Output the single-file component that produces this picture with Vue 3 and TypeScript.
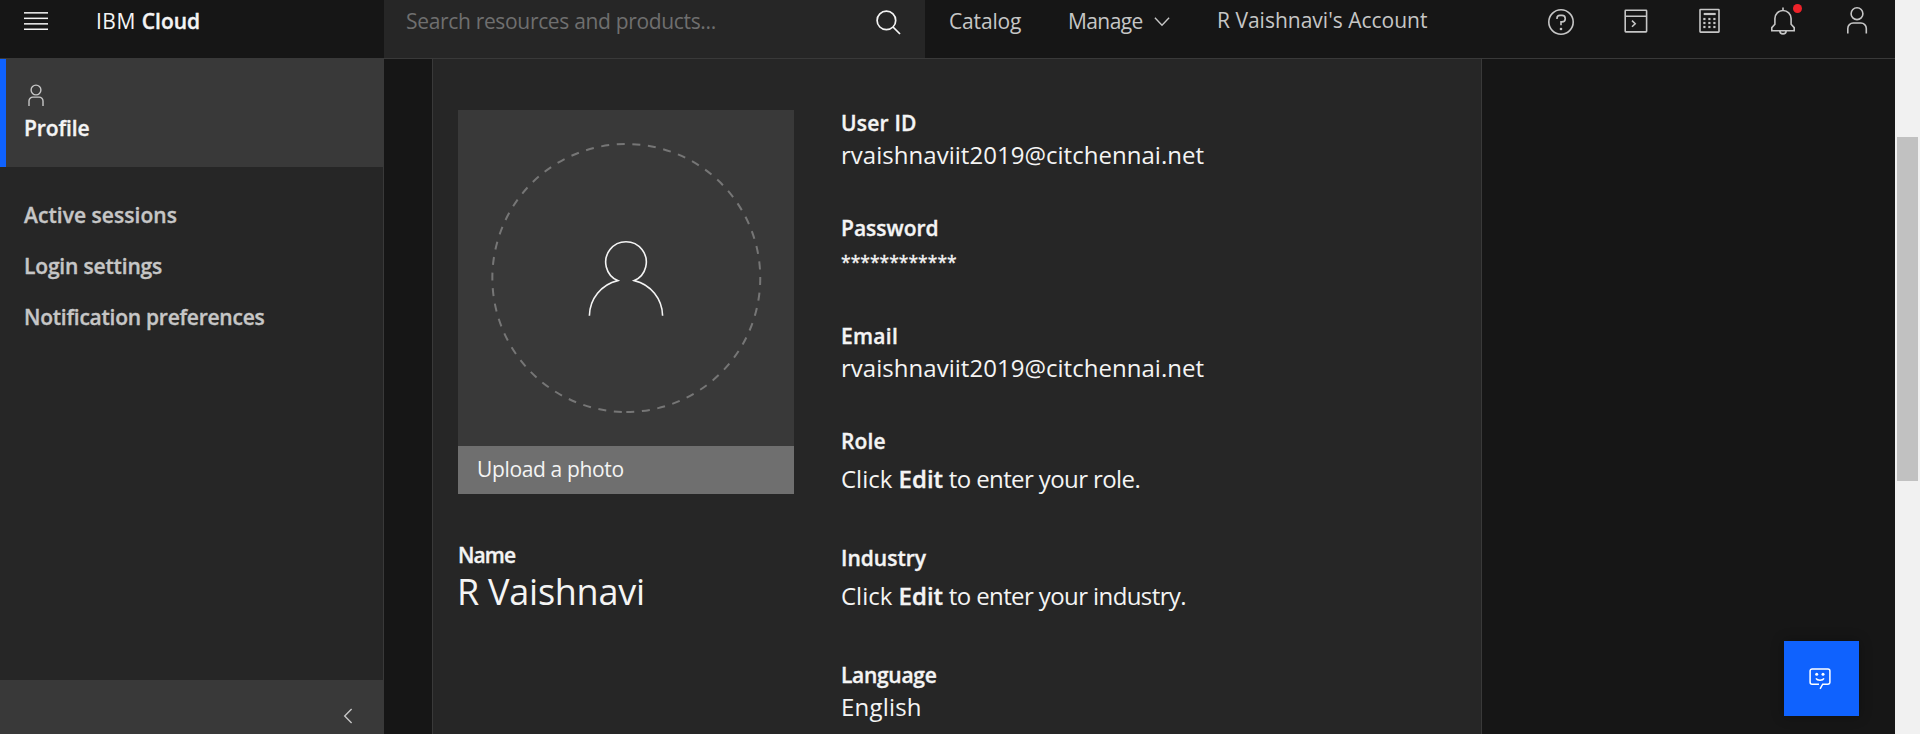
<script setup lang="ts">
interface Tracked {
  text: string
  spacing: number
}

interface Field {
  label: Tracked
  value?: Tracked
  editTarget?: string
  kind: string
}

const sideLinks: Tracked[] = [
  { text: 'Active sessions', spacing: 0.05 },
  { text: 'Login settings', spacing: -0.17 },
  { text: 'Notification preferences', spacing: -0.25 },
]

const fields: Field[] = [
  { label: { text: 'User ID', spacing: 0.2 }, value: { text: 'rvaishnaviit2019@citchennai.net', spacing: 0.03 }, kind: 'plain' },
  { label: { text: 'Password', spacing: 0 }, value: { text: '************', spacing: 0 }, kind: 'secret' },
  { label: { text: 'Email', spacing: 0.3 }, value: { text: 'rvaishnaviit2019@citchennai.net', spacing: 0.03 }, kind: 'plain' },
  { label: { text: 'Role', spacing: 0.1 }, editTarget: 'role', kind: 'editable' },
  { label: { text: 'Industry', spacing: 0 }, editTarget: 'industry', kind: 'editable' },
  { label: { text: 'Language', spacing: -0.3 }, value: { text: 'English', spacing: 0.2 }, kind: 'plain' },
]

const keypad = [13, 17, 21].flatMap((y) => [10.4, 15.4, 20.4].map((x) => ({ x, y })))
const track = (t: Tracked) => ({ letterSpacing: `${t.spacing}px` })
</script>

<template>
  <div class="page">
    <div class="app">
      <header class="header">
        <div class="brand-area">
          <svg class="menu" width="24" height="20" viewBox="0 0 24 20" fill="#f4f4f4">
            <rect y="0.1" width="24" height="1.5" />
            <rect y="5.6" width="24" height="1.5" />
            <rect y="11.1" width="24" height="1.5" />
            <rect y="16.5" width="24" height="1.5" />
          </svg>
          <div class="brand"><span class="ibm">IBM </span><b>Cloud</b></div>
        </div>
        <div class="search">
          <span class="placeholder">Search resources and products...</span>
          <svg width="25" height="25" viewBox="0 0 25 25" fill="none" stroke="#f4f4f4" stroke-width="1.7">
            <circle cx="10.4" cy="10.4" r="9.3" />
            <path d="M17 17l7 7" />
          </svg>
        </div>
        <nav class="nav">
          <span class="catalog">Catalog</span>
          <span class="manage">Manage</span>
          <svg class="chevron" width="16" height="10" viewBox="0 0 16 10" fill="none" stroke="#c6c6c6" stroke-width="1.4">
            <path d="M0.9 0.8L8 8.2l7.1-7.4" />
          </svg>
          <span class="account">R Vaishnavi's Account</span>
        </nav>
        <div class="tools">
          <div class="tool">
            <svg viewBox="0 0 30 30">
              <circle cx="15" cy="16" r="12.2" />
              <path d="M11 13v-.7a2.9 2.9 0 0 1 2.9-2.9h2.1a3.25 3.25 0 0 1 0 6.5h-1v3.4" />
              <circle class="solid" cx="15" cy="23" r="1.3" />
            </svg>
          </div>
          <div class="tool">
            <svg viewBox="0 0 30 30">
              <rect x="5.2" y="4.3" width="21.4" height="21.6" rx="0.6" />
              <path d="M5.2 10.2h21.4M12 14.6l3.2 3.1-3.2 3.1" />
            </svg>
          </div>
          <div class="tool">
            <svg viewBox="0 0 30 30">
              <rect x="6" y="3.5" width="19" height="22.6" rx="0.6" />
              <path d="M9.7 8h12" stroke-width="2.2" />
              <rect v-for="k in keypad" :key="`${k.x}-${k.y}`" class="solid" :x="k.x - 1.1" :y="k.y - 1.1" width="2.2" height="2.2" />
            </svg>
          </div>
          <div class="tool">
            <svg viewBox="0 0 30 30">
              <path d="M15 1.5v3M6.9 18.2v-5.6a8.1 8.1 0 0 1 16.2 0v5.6l3.1 3.4v3.1H3.8v-3.1zM11.8 25a3.2 2.9 0 0 0 6.4 0" />
            </svg>
            <i class="alert"></i>
          </div>
          <div class="tool">
            <svg viewBox="0 0 30 30">
              <circle cx="15" cy="7.7" r="5.9" />
              <path d="M5.8 27.6v-5.2a5.4 5.4 0 0 1 5.4-5.4h7.7a5.4 5.4 0 0 1 5.4 5.4v5.2" />
            </svg>
          </div>
        </div>
      </header>

      <div class="body">
        <aside class="sidebar">
          <div class="current">
            <svg width="16" height="23" viewBox="0 0 16 23" fill="none" stroke="#c6c6c6" stroke-width="1.4">
              <circle cx="8" cy="6" r="4.9" />
              <path d="M1 22v-5a3.9 3.9 0 0 1 3.9-3.9h6.2A3.9 3.9 0 0 1 15 17v5" />
            </svg>
            <span>Profile</span>
          </div>
          <ul class="links">
            <li v-for="l in sideLinks" :key="l.text" :style="track(l)">{{ l.text }}</li>
          </ul>
          <div class="collapse">
            <svg width="10" height="16" viewBox="0 0 10 16" fill="none" stroke="#c6c6c6" stroke-width="1.4">
              <path d="M8.6 1L1.7 8l6.9 7" />
            </svg>
          </div>
        </aside>

        <main class="card">
          <section class="identity">
            <svg class="photo" width="336" height="336" viewBox="0 0 336 336" fill="none">
              <path d="M168.3 302a134 134 0 0 0 0-268a134 134 0 0 0 0 268" stroke="#767676" stroke-width="2" stroke-dasharray="8 7.64" />
              <path d="M131.4 205.7A36.7 36.7 0 0 1 159.7 170.6A20.3 20.3 0 1 1 176.3 170.6A36.7 36.7 0 0 1 204.6 205.7" stroke="#f4f4f4" stroke-width="1.6" />
            </svg>
            <div class="upload">Upload a photo</div>
            <div class="name-label">Name</div>
            <div class="name">R Vaishnavi</div>
          </section>
          <section class="details">
            <div v-for="f in fields" :key="f.label.text" class="field" :class="f.kind">
              <div class="label" :style="track(f.label)">{{ f.label.text }}</div>
              <div v-if="f.value" class="value" :style="track(f.value)">{{ f.value.text }}</div>
              <div v-else class="value">Click <b>Edit</b><span class="hint"> to enter your {{ f.editTarget }}.</span></div>
            </div>
          </section>
        </main>
      </div>

      <div class="chat">
        <svg width="24" height="24" viewBox="0 0 24 24" fill="none" stroke="#ffffff" stroke-width="1.5">
          <path d="M11 17.2H4.1a2 2 0 0 1-2-2V4a2 2 0 0 1 2-2h15.8a2 2 0 0 1 2 2v11.2a2 2 0 0 1-2 2h-5.2l-2.6 4.6" />
          <path d="M8 11.4c1.2 2.4 6.8 2.4 8 0" />
          <circle cx="8.7" cy="7.3" r="1.5" fill="#ffffff" stroke="none" />
          <circle cx="15" cy="7.3" r="1.5" fill="#ffffff" stroke="none" />
        </svg>
      </div>
    </div>
    <div class="scrollbar"><div class="thumb"></div></div>
  </div>
</template>

<style>
body {
  background: #161616;
}
</style>

<style scoped>
.page {
  display: flex;
  height: 734px;
  overflow: hidden;
  background: #161616;
  color: #f4f4f4;
  font: 400 21px/28px "Open Sans", sans-serif;
  white-space: pre;
}
b,
.sidebar,
.label,
.name-label {
  font-weight: 600;
  -webkit-text-stroke: 0.35px currentColor;
}
.app {
  position: relative;
  display: flex;
  flex-direction: column;
  width: 1895px;
}
.header {
  display: flex;
  flex: none;
  box-sizing: border-box;
  height: 59px;
  border-bottom: 1px solid #393939;
}
.brand-area {
  display: flex;
  width: 384px;
}
.menu {
  margin: 12px 0 0 24px;
}
.brand {
  margin: 7px 0 0 48px;
}
.ibm {
  letter-spacing: 0.5px;
}
.search {
  display: flex;
  justify-content: space-between;
  box-sizing: border-box;
  width: 541px;
  padding: 7px 24px 0 22px;
  background: #262626;
  color: #6f6f6f;
}
.search svg {
  margin-top: 3px;
}
.placeholder {
  letter-spacing: -0.33px;
}
.nav {
  display: flex;
  flex: 1;
  padding: 7px 0 0 24px;
  color: #c6c6c6;
}
.catalog {
  width: 119px;
  letter-spacing: -0.15px;
}
.manage {
  width: 86px;
  letter-spacing: -0.6px;
}
.chevron {
  margin: 10px 47px 0 0;
}
.account {
  margin-top: -1px;
}
.tools {
  display: flex;
  padding-right: 1px;
}
.tool {
  position: relative;
  width: 74px;
  padding-top: 6px;
}
.tool svg {
  display: block;
  width: 30px;
  height: 30px;
  margin: 0 auto;
  fill: none;
  stroke: #c6c6c6;
  stroke-width: 1.6;
}
.tool svg .solid {
  fill: #c6c6c6;
  stroke: none;
}
.alert {
  position: absolute;
  top: 4px;
  right: 18px;
  width: 9px;
  height: 9px;
  border-radius: 50%;
  background: #ee2229;
}
.body {
  display: flex;
  flex: 1;
  min-height: 0;
}
.sidebar {
  display: flex;
  flex-direction: column;
  box-sizing: border-box;
  width: 384px;
  border-right: 1px solid #393939;
  background: #262626;
}
.current {
  display: flex;
  flex-direction: column;
  box-sizing: border-box;
  height: 108px;
  padding: 25px 0 0 18px;
  border-left: 6px solid #0f62fe;
  background: #393939;
  letter-spacing: -0.1px;
}
.current svg {
  margin: 0 0 7px 4px;
}
.links {
  display: grid;
  gap: 23px;
  margin: 34px 0 0;
  padding: 0 0 0 24px;
  list-style: none;
  color: #c6c6c6;
}
.collapse {
  display: flex;
  box-sizing: border-box;
  justify-content: flex-end;
  height: 54px;
  margin-top: auto;
  padding: 28px 30px 0 0;
  background: #393939;
}
.card {
  display: flex;
  box-sizing: border-box;
  width: 1050px;
  margin-left: 48px;
  border: solid #393939;
  border-width: 0 1px;
  background: #262626;
  overflow: hidden;
}
.identity {
  width: 336px;
  margin: 51px 47px 0 25px;
}
.photo {
  display: block;
  background: #393939;
}
.upload {
  box-sizing: border-box;
  height: 48px;
  padding: 9px 0 0 19px;
  background: #6f6f6f;
  letter-spacing: -0.35px;
}
.name-label {
  margin-top: 47px;
  letter-spacing: -0.9px;
}
.name {
  font-size: 36px;
  line-height: 46px;
  margin-left: -1px;
  letter-spacing: -0.25px;
}
.details {
  padding-top: 50px;
}
.field {
  height: 105px;
}
.value {
  margin-top: 2px;
  font-size: 24px;
  line-height: 32px;
}
.secret {
  height: 108px;
}
.secret .value {
  margin-top: 4px;
  font-size: 17.5px;
  -webkit-text-stroke: 0.35px currentColor;
}
.editable {
  height: 117px;
}
.editable .value {
  margin-top: 8px;
}
.hint {
  letter-spacing: -0.6px;
}
.chat {
  position: absolute;
  left: 1784px;
  top: 641px;
  box-sizing: border-box;
  width: 75px;
  height: 75px;
  padding: 26px 0 0 24px;
  background: #0f62fe;
  box-shadow: 0 0 12px rgba(0, 0, 0, 0.3);
}
.chat svg {
  display: block;
}
.scrollbar {
  box-sizing: border-box;
  width: 25px;
  padding: 137px 2px 0;
  background: #f1f1f1;
}
.thumb {
  height: 344px;
  background: #c1c1c1;
}
</style>
